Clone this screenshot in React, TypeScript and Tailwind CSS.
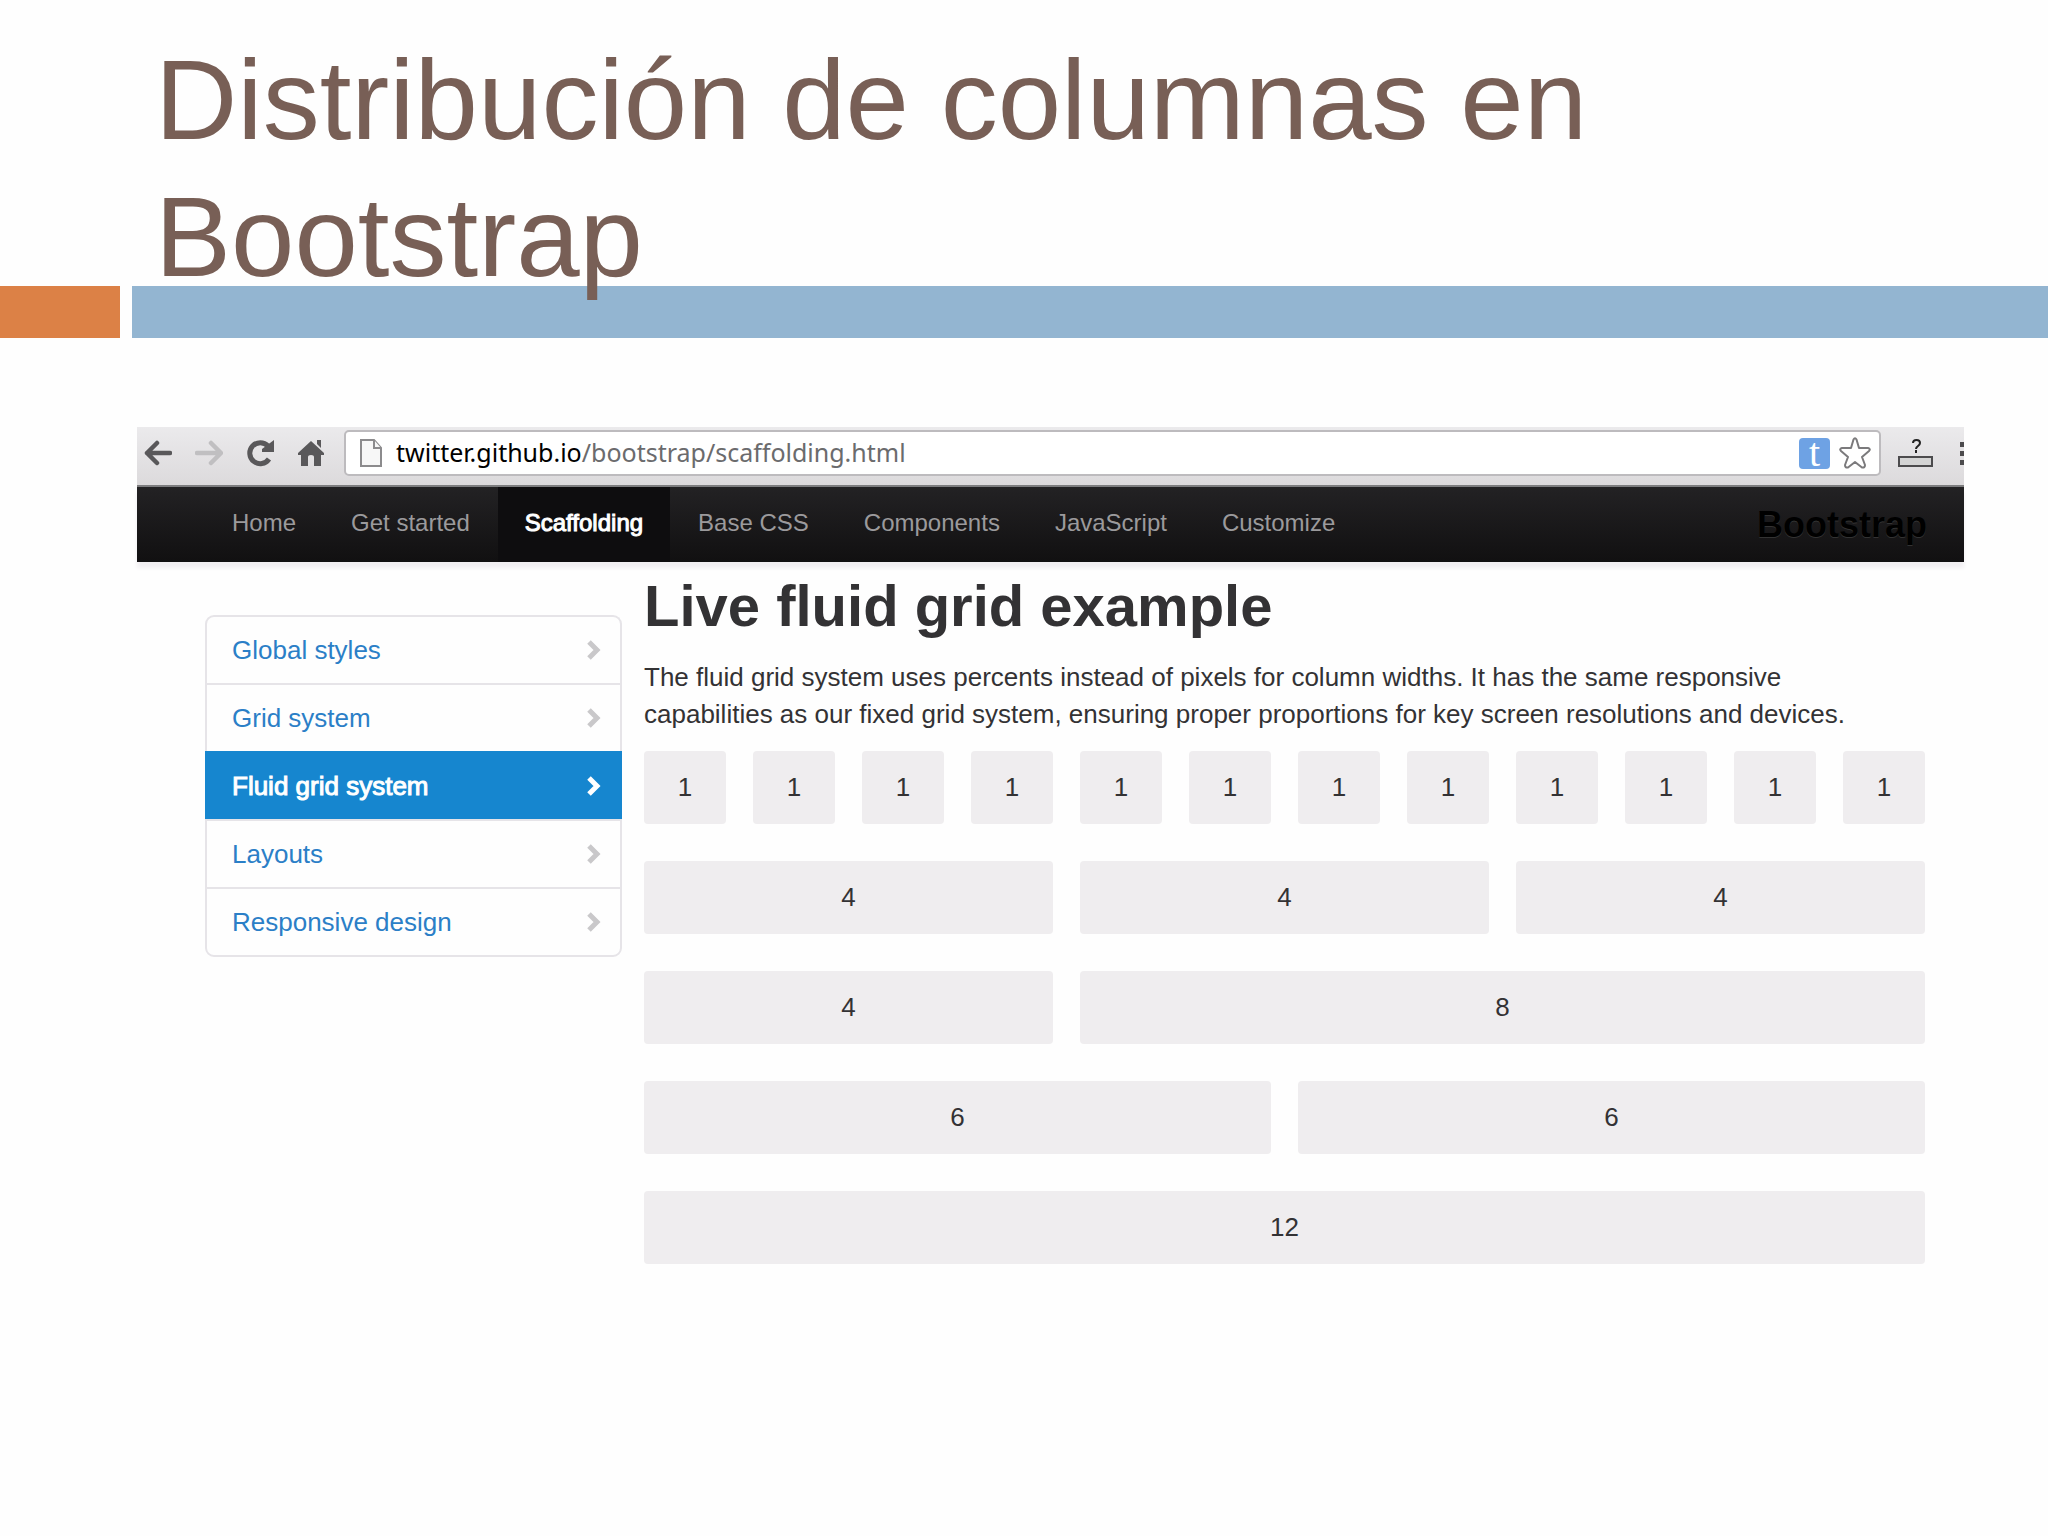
import { clsx } from "clsx";

const navItems = [
  { label: "Home" },
  { label: "Get started" },
  { label: "Scaffolding", active: true },
  { label: "Base CSS" },
  { label: "Components" },
  { label: "JavaScript" },
  { label: "Customize" },
];

const sideItems = [
  { label: "Global styles" },
  { label: "Grid system" },
  { label: "Fluid grid system", active: true },
  { label: "Layouts" },
  { label: "Responsive design" },
];

const gridRows = [
  [1, 1, 1, 1, 1, 1, 1, 1, 1, 1, 1, 1],
  [4, 4, 4],
  [4, 8],
  [6, 6],
  [12],
];

const spans: Record<number, string> = {
  1: "col-span-1",
  4: "col-span-4",
  6: "col-span-6",
  8: "col-span-8",
  12: "col-span-12",
};

const BrowserBar = () => (
  <div className="flex h-[60px] items-center border-b-2 border-[#7d7d7f] bg-gradient-to-b from-[#ebeaec] to-[#dcdadc] pb-[6px] pl-[7px]">
    <div className="flex shrink-0 gap-[23px]">
      <button aria-label="Back" className="h-7 w-7">
        <svg viewBox="0 0 28 28" fill="none" stroke="#59585a" strokeWidth="4.5" strokeLinecap="round" strokeLinejoin="round">
          <path d="M26 14H3M13 4 3 14l10 10" />
        </svg>
      </button>
      <button aria-label="Forward" className="h-7 w-7">
        <svg viewBox="0 0 28 28" fill="none" stroke="#c0bfc1" strokeWidth="4.5" strokeLinecap="round" strokeLinejoin="round">
          <path d="M2 14h23M16 4l10 10-10 10" />
        </svg>
      </button>
      <button aria-label="Reload" className="h-7 w-7">
        <svg viewBox="0 0 28 28" fill="none">
          <path d="M22 7A10.5 10.5 0 1 0 23 20" stroke="#59585a" strokeWidth="5" />
          <path d="M28 1v12H16v-3z" fill="#59585a" />
        </svg>
      </button>
      <button aria-label="Home" className="h-7 w-7">
        <svg viewBox="0 0 28 28" fill="#59585a">
          <path d="M14 2 1 14v2h3v11h7v-9q0-2 3-2t3 2v9h7V16h3v-2z" />
          <path d="M20 1h4v8l-4-4z" />
        </svg>
      </button>
    </div>

    <div className="ml-[19px] flex h-[46px] min-w-0 flex-1 items-center rounded-[5px] border-2 border-[#bdbbbe] bg-white pl-[14px] pr-[8px]">
      <svg className="h-7 w-[22px] shrink-0" viewBox="0 0 22 28" fill="#f7f7f7" stroke="#8c8b8d" strokeWidth="2">
        <path d="M1 1h13l7 8v18H1z" />
        <path d="M14 1v8h7" />
      </svg>
      <a href="#" className="ml-[14px] flex-1 pb-[2px] font-['Noto_Sans',sans-serif] text-[25px] leading-8 text-[#6b6b6d]">
        <span className="text-black">twitter.github.io</span>/bootstrap/scaffolding.html
      </a>
      <button
        aria-label="Twitter"
        className="h-[31px] w-[31px] rounded-[4px] bg-[#6ea2e4] font-['Liberation_Serif',serif] text-[40px] leading-[24px] text-white"
      >
        t
      </button>
      <button aria-label="Bookmark" className="ml-[9px] h-8 w-8">
        <svg viewBox="0 0 32 32" fill="#fff" stroke="#7b7a7c" strokeWidth="2" strokeLinejoin="round">
          <path d="M14.500 2.500Q16 0 17.500 2.500L20 11h9q3 1 1 3l-7 6 3 8q0 3-3 2.500L16 25l-7 5.500Q6 31 6 28l3-8-7-6q-2-2 1-3h9z" />
        </svg>
      </button>
    </div>

    <button aria-label="Extension" className="ml-[17px] h-7 w-[35px] shrink-0">
      <svg viewBox="0 0 35 28" fill="none">
        <path d="M15 4c0-4 7-4 7 0 0 3-4 3-4 6M18 11v3" stroke="#222" strokeWidth="2" />
        <path d="M1 18h33v9H1z" fill="#d4d4d4" stroke="#4c4b4d" strokeWidth="2" />
      </svg>
    </button>
    <button aria-label="Menu" className="ml-[27px] flex w-1 shrink-0 flex-col gap-[4px]">
      <span className="h-[5px] bg-[#4c4b4d]" />
      <span className="h-[5px] bg-[#4c4b4d]" />
      <span className="h-[5px] bg-[#4c4b4d]" />
    </button>
  </div>
);

const NavBar = () => (
  <nav className="flex h-[75px] items-stretch gap-px bg-gradient-to-b from-[#232224] to-[#111011] pl-[68px] pr-[37px] shadow-[0_6px_4px_#f1eff2]">
    {navItems.map((item) => (
      <a
        key={item.label}
        href="#"
        className={clsx(
          "flex items-center px-[27px] pb-1 text-[24px]",
          item.active ? "bg-[#0e0d0f] text-white [-webkit-text-stroke:1px_white]" : "text-[#9b9a9c]"
        )}
      >
        {item.label}
      </a>
    ))}
    <a href="#" className="ml-auto flex items-center text-[36px] font-bold text-black [text-shadow:0_1px_0_#333]">
      Bootstrap
    </a>
  </nav>
);

const SideNav = () => (
  <ul className="mt-[53px] w-[417px] shrink-0">
    {sideItems.map((item) => (
      <li key={item.label} className="group">
        <a
          href="#"
          className={clsx(
            "flex h-[68px] items-center justify-between border-x-2 border-t-2 pl-[25px] pr-[18px] text-[26px] group-first:rounded-t-[9px] group-last:h-[70px] group-last:rounded-b-[9px] group-last:border-b-2",
            item.active
              ? "border-[#1686cf] bg-[#1686cf] text-white [-webkit-text-stroke:1px_white]"
              : "border-[#e6e4e8] text-[#2b7fc7]"
          )}
        >
          {item.label}
          <svg
            className={clsx("h-5 w-4", item.active ? "text-white" : "text-[#c9c8ca]")}
            viewBox="0 0 16 20"
            fill="none"
            stroke="currentColor"
            strokeWidth="5"
          >
            <path d="M3 2l8 8-8 8" />
          </svg>
        </a>
      </li>
    ))}
  </ul>
);

const GridExample = () => (
  <main className="min-w-0 flex-1">
    <h2 className="mt-[12px] text-[58px] font-bold leading-[64px] text-[#333234]">Live fluid grid example</h2>
    <p className="mt-[21px] max-w-[1240px] text-[26px] leading-[37px] text-[#333234]">
      The fluid grid system uses percents instead of pixels for column widths. It has the same responsive
      capabilities as our fixed grid system, ensuring proper proportions for key screen resolutions and devices.
    </p>
    <div className="mt-[18px] flex flex-col gap-[37px]">
      {gridRows.map((row, i) => (
        <div key={i} className="grid grid-cols-12 gap-[27px]">
          {row.map((size, j) => (
            <div
              key={j}
              className={clsx(
                "flex h-[73px] items-center justify-center rounded-[4px] bg-[#efedef] text-[26px] text-[#333234]",
                spans[size]
              )}
            >
              {size}
            </div>
          ))}
        </div>
      ))}
    </div>
  </main>
);

const App = () => {
  return (
    <div className="min-h-screen bg-[#fefefe] font-['Liberation_Sans',sans-serif]">
      <header>
        <h1 className="relative z-10 -mb-[19px] pl-[155px] pr-[300px] pt-[31px] text-[114px] leading-[137px] text-[#785f56]">
          Distribución de columnas en Bootstrap
        </h1>
        <div className="flex h-[52px] gap-[12px]">
          <div className="w-[120px] bg-[#dc8146]" />
          <div className="flex-1 bg-[#93b5d1]" />
        </div>
      </header>

      <section className="ml-[137px] mr-[84px] mt-[89px]">
        <BrowserBar />
        <NavBar />
        <div className="flex gap-[22px] pl-[68px] pr-[39px]">
          <SideNav />
          <GridExample />
        </div>
      </section>
    </div>
  );
};

export default App;
